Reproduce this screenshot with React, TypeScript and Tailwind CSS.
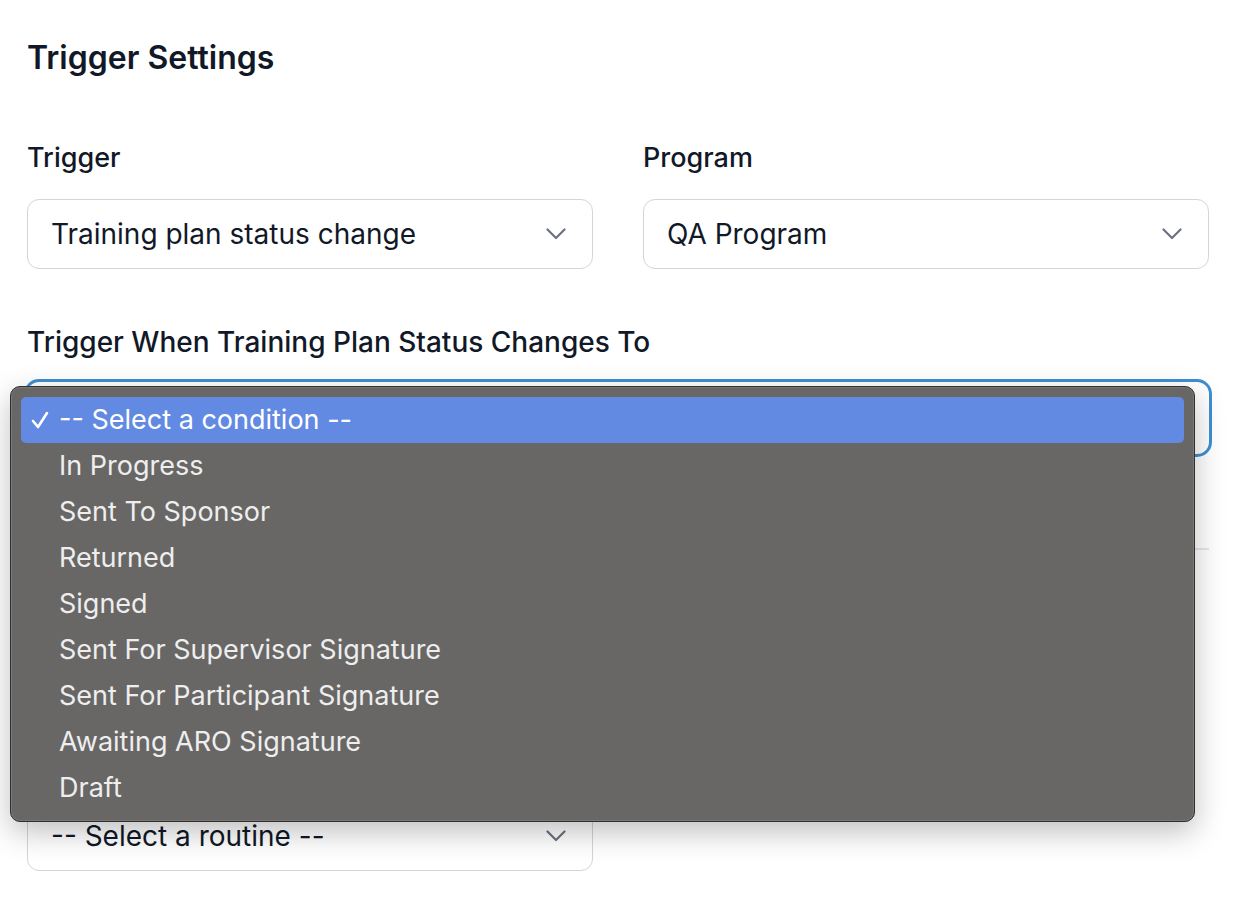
const conditions = [
  "-- Select a condition --",
  "In Progress",
  "Sent To Sponsor",
  "Returned",
  "Signed",
  "Sent For Supervisor Signature",
  "Sent For Participant Signature",
  "Awaiting ARO Signature",
  "Draft",
];

function Chevron() {
  return (
    <svg width="20" height="12" viewBox="0 0 20 12" fill="none" className="text-[#6b7280]">
      <path d="M1.5 1.5 L10 10 L18.5 1.5" stroke="currentColor" strokeWidth="2.2" strokeLinecap="round" strokeLinejoin="round" />
    </svg>
  );
}

function SelectBox({ value, focused }: { value: string; focused?: boolean }) {
  return (
    <div
      className={
        "flex items-center justify-between rounded-[12px] border bg-white pl-[23px] pr-[26px] " +
        (focused
          ? "h-[72px] border-transparent ring-[3px] ring-[#3f8fd0]"
          : "h-[70px] border-[#d4d5d9]")
      }
    >
      <span className="text-[28px] leading-[34px] text-[#111827]">{value}</span>
      <Chevron />
    </div>
  );
}

export default function App() {
  return (
    <div
      className="relative h-[912px] w-[1256px] overflow-hidden bg-white pl-[27px] pr-[47px] pt-[39px] text-[#111827]"
      style={{ fontFamily: "Inter, 'Noto Sans', sans-serif" }}
    >
      <h2 className="text-[32px] font-semibold leading-[38px]">Trigger Settings</h2>

      <div className="mt-[65px] grid grid-cols-2 gap-x-[50px]">
        <div>
          <p className="text-[27px] font-medium leading-[32px]">Trigger</p>
          <div className="mt-[25px]">
            <SelectBox value="Training plan status change" />
          </div>
        </div>
        <div>
          <p className="text-[27px] font-medium leading-[32px]">Program</p>
          <div className="mt-[25px]">
            <SelectBox value="QA Program" />
          </div>
        </div>
      </div>

      <p className="mt-[57px] text-[28px] font-medium leading-[32px]">
        Trigger When Training Plan Status Changes To
      </p>
      <div className="mt-[24px]">
        {/* text is covered by the open menu */}
        <SelectBox value="" focused />
      </div>

      <div className="mt-[94px] h-[2px] bg-[#e5e7eb]" />

      {/* section under the menu; only the routine select peeks out */}
      <div className="mt-[251px] w-[566px]">
        <SelectBox value="-- Select a routine --" />
      </div>

      <div
        className="absolute left-[10px] top-[386px] w-[1185px] rounded-[10px] border border-[#2f2f2f] bg-[#686766] p-[10px] shadow-[0_10px_30px_rgba(0,0,0,0.25),inset_0_0_0_1px_rgba(255,255,255,0.12)]"
        style={{ fontFamily: "Inter, 'Liberation Sans', sans-serif" }}
      >
        {conditions.map((c, i) => (
          <div
            key={c}
            className={
              "flex h-[46px] items-center rounded-[5px] text-[27px] text-[#eeeeee] " +
              (i === 0 ? "bg-[#628ae3] text-white" : "")
            }
          >
            <span className="flex w-[38px] pl-[10px]">
              {i === 0 ? (
                <svg width="18" height="18" viewBox="0 0 18 18" fill="none">
                  <path d="M2 10 L7 16 L16 2" stroke="white" strokeWidth="2.6" strokeLinecap="round" strokeLinejoin="round" />
                </svg>
              ) : null}
            </span>
            <span>{c}</span>
          </div>
        ))}
      </div>
    </div>
  );
}
